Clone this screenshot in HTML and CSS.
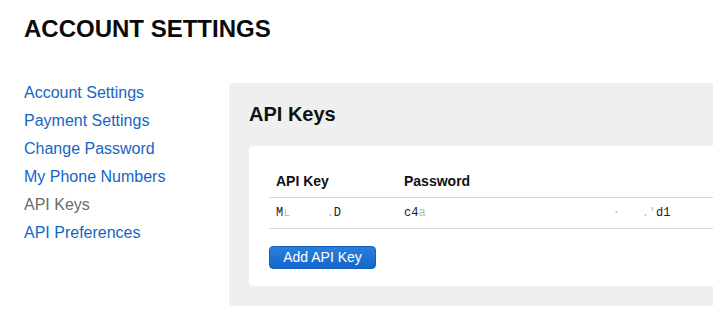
FILE: index.html
```html
<!DOCTYPE html>
<html>
<head>
<meta charset="utf-8">
<link rel="stylesheet" href="styles.css">
</head>
<body>
<div class="page">
  <h1 class="title">ACCOUNT SETTINGS</h1>
  <div class="layout">
    <nav class="sidebar">
      <a class="nav-link" href="#">Account Settings</a>
      <a class="nav-link" href="#">Payment Settings</a>
      <a class="nav-link" href="#">Change Password</a>
      <a class="nav-link" href="#">My Phone Numbers</a>
      <span class="nav-link active">API Keys</span>
      <a class="nav-link" href="#">API Preferences</a>
    </nav>
    <section class="panel">
      <h2 class="panel-title">API Keys</h2>
      <div class="card">
        <table class="keys">
          <thead>
            <tr><th class="col-key">API Key</th><th>Password</th></tr>
          </thead>
          <tbody>
            <tr><td class="mono col-key">M<span class="blur">ʟ</span>     <span class="blur">.</span>D</td><td class="mono">c4<span class="blur">a</span>                          <span class="blur">·</span>   <span class="blur">.'</span>d1</td></tr>
          </tbody>
        </table>
        <button class="btn">Add API Key</button>
      </div>
    </section>
  </div>
</div>
</body>
</html>
```
FILE: styles.css
```css
html, body {
  margin: 0;
  padding: 0;
  background: #fff;
  overflow: hidden;
}
body {
  font-family: "Liberation Sans", Arial, Helvetica, sans-serif;
  color: #111;
}
.page {
  padding: 15px 0 0 24px;
}
.title {
  margin: 0;
  font-size: 24px;
  line-height: 28px;
  font-weight: bold;
  color: #0a0a0a;
}
.layout {
  display: flex;
  margin-top: 36px;
}
.sidebar {
  width: 205px;
  flex: none;
  display: flex;
  flex-direction: column;
}
.nav-link {
  font-size: 16px;
  line-height: 28px;
  color: #1565c4;
  text-decoration: none;
  white-space: nowrap;
}
.nav-link.active {
  color: #6b6b6b;
}
.panel {
  margin-top: 4px;
  width: 600px;
  flex: none;
  background: #efefef;
  border-radius: 4px;
  padding: 19px 0 20px 20px;
  box-sizing: border-box;
}
.panel-title {
  margin: 0 0 20px;
  font-size: 20px;
  line-height: 24px;
  font-weight: bold;
  color: #111;
}
.card {
  background: #fff;
  border-radius: 4px;
  padding: 20px 20px 17px 20px;
}
.keys {
  width: 100%;
  border-collapse: collapse;
}
.keys th {
  text-align: left;
  font-size: 14px;
  font-weight: bold;
  height: 31px;
  padding: 0 7px;
  box-sizing: border-box;
  border-bottom: 1px solid #d6d6d6;
  vertical-align: middle;
}
.keys td {
  height: 30px;
  padding: 0 7px;
  border-bottom: 1px solid #dcdcdc;
  vertical-align: middle;
}
.col-key {
  width: 114px;
}
.mono {
  font-family: "Liberation Mono", "Courier New", monospace;
  font-size: 12px;
  color: #222;
  white-space: pre;
}
.blur {
  color: #bbb;
}
.btn {
  display: block;
  margin-top: 17px;
  width: 107px;
  height: 23px;
  padding: 0;
  border: 1px solid #1260c0;
  border-radius: 4px;
  background: linear-gradient(#2a7fdc, #1466ca);
  color: #fff;
  font-family: "Liberation Sans", Arial, Helvetica, sans-serif;
  font-size: 14px;
  line-height: 21px;
  cursor: pointer;
}
```
